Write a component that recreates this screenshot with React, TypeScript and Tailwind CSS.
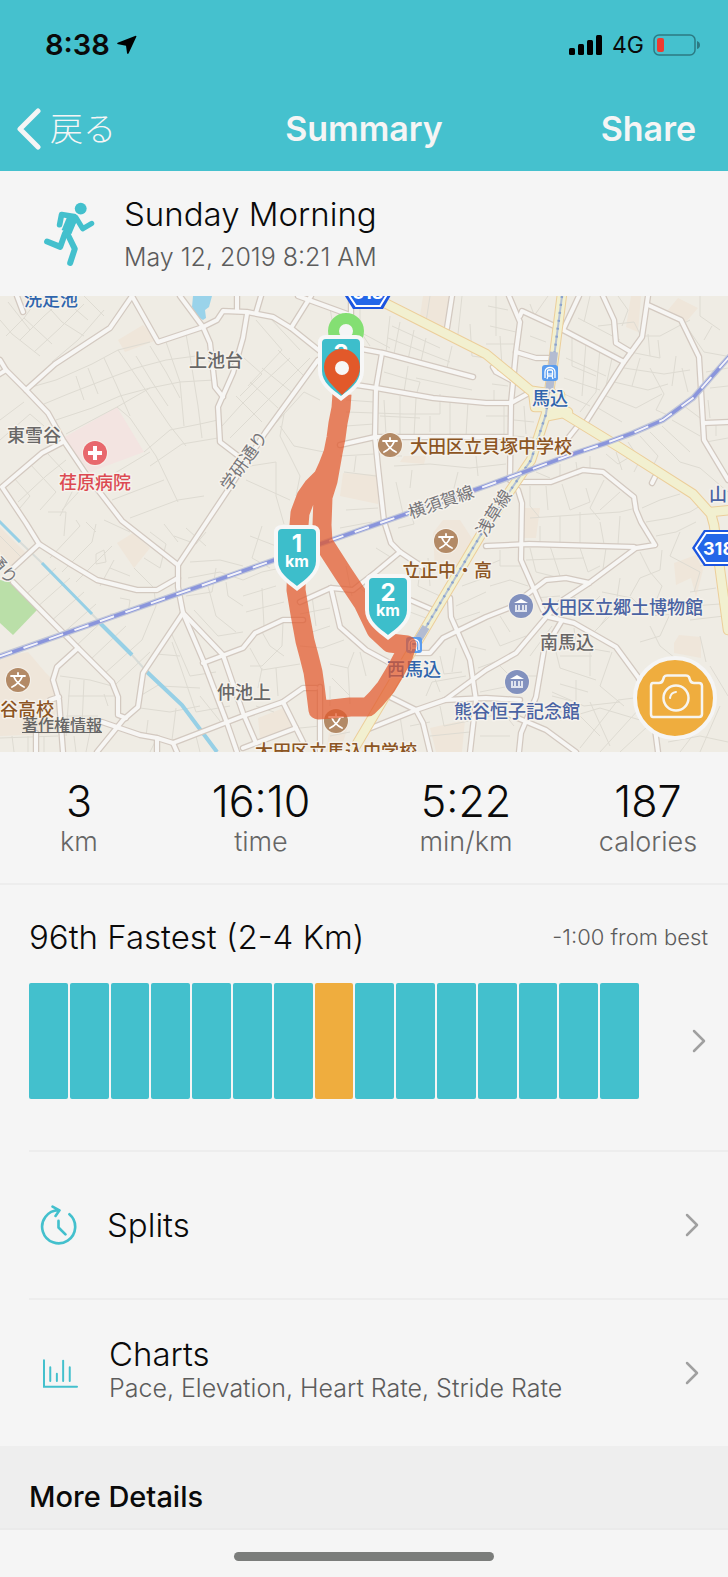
import React from 'react';

const jp = '"Noto Sans CJK JP", "Liberation Sans", sans-serif';

const stats = [
  { value: '3', label: 'km' },
  { value: '16:10', label: 'time' },
  { value: '5:22', label: 'min/km' },
  { value: '187', label: 'calories' },
];

const BAR_COUNT = 15;
const CURRENT_BAR = 7;

const lanes = [
  'M0 24L12 38L40 60M8 6L30 34M24 22L52 48M42 4L62 26L84 40M60 0L88 24M84 0L104 20M20 44L44 20L60 6M34 56L60 32L84 8M52 66L78 44L104 14M6 40L24 22L40 0',
  'M28 92L56 84L92 68L118 54L150 46M44 108L68 98L104 84L136 72L166 64L196 60M56 124L92 112L120 100L150 92L180 86L214 84M66 138L117 111L150 92',
  'M76 80L84 104M88 72L98 98M104 62L116 88L130 120M118 54L136 80L170 130L186 150M136 60L152 86L168 110M150 50L166 76L180 102M166 46L180 86L184 130M186 38L190 60L198 110L202 142',
  'M144 156L170 134L200 128L218 124M150 170L182 148L218 142M117 111L130 122L156 160L178 206M100 186L150 156M112 204L164 184M130 222L178 204L204 200',
  'M0 124L24 106M0 144L30 118L44 130M14 182L30 200L20 212M30 168L56 196L40 214M48 158L76 188L60 220M66 164L46 180L18 206M84 190L62 214M48 216L66 216L64 240',
  'M222 130L240 110L262 88L290 62M230 142L256 116L284 88L310 62M236 100L262 126M250 86L278 112M262 72L294 98M278 54L304 80M244 62L262 78L240 100M256 24L282 54L248 90M270 22L300 54',
  'M264 140L284 118L304 96L320 104M280 130L294 150L324 156M284 118L280 140L300 180L296 200M250 170L276 166L276 200L284 228M246 184L290 204M330 12L336 48M350 20L370 50M360 8L360 36L390 52',
  'M390 20L386 56M400 26L394 58M414 34L408 64M426 42L420 70M392 30L440 52M388 42L450 66M430 0L426 26L446 34M462 0L458 38M470 28L472 60L486 62M452 50L446 76M408 70L404 96M416 82L472 94M384 76L404 82L420 86L416 100',
  'M346 104L374 106M346 116L404 118L440 118L440 98M346 130L374 128M384 104L386 138M400 100L400 140M416 102L414 140M430 120L430 136M380 120L420 122M450 104L450 140M468 106L466 140',
  'M340 160L374 158M344 176L376 180M384 160L402 160M394 170L430 168L470 172L506 168M396 186L404 222M412 174L410 192M458 176L452 200M476 160L478 180M346 214L378 212M340 232L372 226M356 160L354 176',
  'M488 10L508 14M490 30L516 36M496 0L496 40M500 40L502 70M486 48L514 48M492 88L508 90M494 94L494 108M504 110L504 140M486 120L508 120M514 124L534 126M514 140L540 142M524 110L526 138',
  'M530 8L536 24M548 0L534 20M530 40L546 46M572 40L572 70L596 80M586 46L582 100M600 52L596 96L580 116M612 62L606 90M566 62L606 80M564 82L600 94M560 96L590 110M578 22L620 44M590 0L584 26M598 30L634 26L642 42',
  'M618 0L628 14L622 30M630 56L660 62L658 44M624 72L664 78L690 74M614 86L648 94L668 88M606 100L636 112L662 98M598 112L622 126M648 38L650 60M640 62L632 90M650 72L664 98L656 114L670 120M676 60L672 90M682 72L688 96M690 24L660 40L644 40',
  'M682 24L704 56L726 60M700 0L700 20L720 34M712 30L704 44M706 76L728 72M710 92L728 90M708 104L710 122M716 128L716 140M706 146L728 142M684 110L700 122M672 124L700 140M662 130L690 156M650 136L680 166L700 172L728 196M640 140L658 160L650 176',
  'M628 146L640 164L634 176M616 156L622 174M606 158L618 168L628 162M590 160L590 172M576 166L578 180M560 168L560 182M536 176L550 182M530 190L530 210L540 222M546 190L548 214M562 188L570 214L590 206L586 192M604 184L590 212L600 224M620 196L600 214',
  'M530 222L620 216L636 212M540 230L540 246M560 220L560 248M580 216L580 248M600 226L604 248M620 220L618 248M500 254L500 270L522 270M486 270L500 264M530 252L536 276L560 282M550 250L560 280M580 252L588 276L600 270M606 252L602 280M526 264L584 262',
  'M642 212L660 204L680 198M646 226L670 222L690 216L700 210M656 240L676 236L696 226M662 254L660 274L640 282L630 300M680 236L670 260L700 276L694 296M640 256L650 276L662 290L650 320M602 296L632 302L650 320L700 316M620 282L616 308L600 330',
  'M690 296L716 292M692 310L720 308M690 324L724 320M700 270L716 268M706 366L700 340M650 330L660 350L680 366M670 318L660 340L640 346M594 336L610 320M580 320L600 300M574 332L576 350L610 356M612 356L600 390L624 410M556 356L560 372L596 384M576 384L576 406L552 400',
  'M560 360L592 360M560 388L588 396M590 350L590 380M552 396L584 410L620 406M544 412L580 420L600 440M560 424L600 412L640 424M580 452L618 404L650 400M600 456L640 412M620 456L648 430M590 406L610 450M668 446L700 440L728 446M680 456L700 430M720 410L700 456M710 370L728 400',
  'M0 240L22 262M50 262L80 230L76 224M62 276L92 246L96 228M76 286L112 250M24 300L56 272M36 312L70 282M50 326L84 296M62 338L96 308M76 350L108 320M90 364L126 330M104 378L142 344L156 310L154 294M116 388L150 356',
  'M96 258L104 254L106 266L96 268ZM110 272L130 280M114 264L100 290M120 302L130 304L128 318L110 318M86 226L96 236M104 224L130 236M150 236L166 248L160 272L144 262M134 272L156 294M164 228L178 246M174 240L196 248L206 236M186 232L206 250M190 266L220 264L243 270',
  'M188 282L220 276L243 284M186 300L212 296L216 272M194 314L218 340L243 336M208 290L216 320L236 336M226 286L228 300L243 310M170 334L190 380L216 376M156 358L180 360M148 374L160 390L200 392M160 388L140 400M172 346L196 416L230 410M140 412L170 416L200 410',
  'M148 424L146 440M176 412L172 444M200 400L224 430M150 456L156 444M196 440L200 456M60 380L90 384L112 390M68 400L114 400M70 384L66 440M84 384L82 430M104 398L108 410M66 420L98 420M66 436L100 434M74 440L76 456M90 436L86 456M0 442L58 440M12 440L14 456M28 440L28 456M44 440L44 456',
  'M243 300L276 290M246 316L284 306M262 292L264 330M243 284L262 276L290 270M250 240L276 250M262 230L252 262L270 272M346 270L352 300M330 312L300 318M312 300L316 330M330 330L312 336M344 344L322 352L300 350M262 336L270 350L284 360M283 326L282 350L262 370L250 370',
  'M250 352L262 374L300 368M258 392L262 372M276 372L278 400M330 368L348 372L354 356M332 382L350 400M348 372L350 408M360 356L366 380M330 390L330 410M256 410L274 416M300 432L320 430M330 440L350 436M360 292L370 300L386 290M376 300L370 314M390 302L388 282',
  'M376 252L392 262M398 232L414 228L410 214M412 264L440 268M420 274L418 290L440 300M428 262L430 290M442 300L436 320M410 316L426 322M456 310L486 296M456 324L480 316M462 290L484 282M440 360L444 378L462 376M430 370L440 396M456 352L452 376M470 350L486 354M478 372L500 364',
  'M426 400L432 386L466 380M480 396L510 390M400 420L404 446M410 430L430 426M440 410L444 430L474 424M430 440L470 436M478 420L506 420L514 430M480 440L510 440M490 330L500 350L526 340M500 320L510 336M528 290L510 284L490 290M534 302L560 300M496 366L510 380L540 380M552 330L530 360M572 300L590 310',
];

const roads = [
  'M132 0L110 32L55 68L26 94',
  'M0 64L6 74L26 94L48 117L63 144L88 181L122 225L178 269L178 291L183 317L143 377L138 411L123 424L97 456',
  'M-2 79L6 74',
  'M63 146L42 157L2 191L26 227L39 248L72 269L97 284L137 294L157 294L178 282',
  'M132 0L158 46L203 31L217 24L223 15L247 16L273 21L291 32L321 56',
  'M180 0L203 31L210 47L215 91L223 101',
  'M247 18L243 42L233 77L218 111L220 146L237 159',
  'M17 0L23 16',
  'M237 0L237 15',
  'M318 64L265 137L230 191L206 227L178 269',
  'M298 0L350 19',
  'M351 0L351 20',
  'M311 0L291 32',
  'M261 0L256 17',
  'M356 52L383 57L473 81',
  'M356 89L376 92L433 102L486 107L511 107L529 97',
  'M382 57L376 92L375 141L378 171L384 225L391 247L400 256L376 276L353 294L331 292L300 306',
  'M400 256L424 272',
  'M340 149L375 141L486 141L508 141',
  'M452 0L447 32',
  'M509 0L520 26L516 56L511 107L510 184',
  'M520 20L522 15L563 34L624 66',
  'M516 56L536 62L552 62',
  'M579 0L563 34',
  'M603 0L614 24L616 47L631 56',
  'M648 0L642 41L624 66L586 126L577 131L569 141',
  'M648 9L681 24L699 61L704 144L728 184',
  'M704 127L728 126',
  'M521 186L551 186L583 174L603 176L634 201L636 214L641 226L655 249L636 252L589 287L563 304L548 319L516 357L486 374L445 404L416 414L366 434',
  'M518 194L522 207L521 264L543 314L549 321L574 327L616 351L638 381L652 410L658 456',
  'M655 181L652 187',
  'M493 71L496 76L511 84',
  'M39 248L13 272',
  'M13 286L78 352L112 386L118 401L118 419L126 422',
  'M78 352L57 371L53 384L59 404L63 456',
  'M50 404L59 401',
  'M183 317L203 364L227 427L237 456',
  'M183 317L223 359L243 417L256 447',
  'M203 367L243 352L255 337L283 324L303 324',
  'M102 426L140 439L157 442L173 447L243 420L283 406L303 392L316 392',
  'M157 442L157 456',
  'M173 447L177 456',
  'M36 437L36 456',
  'M243 452L296 432',
  'M283 406L303 446',
  'M331 292L340 331L366 354L390 367',
  'M390 401L416 414L423 427L430 456',
  'M445 404L486 402L520 404',
  'M450 302L451 321L470 364L476 404L470 456',
  'M415 357L430 357L443 342L486 321L509 312L546 284L566 282L589 287',
  'M410 304L433 314',
  'M320 391L320 456',
  'M486 250L529 248L634 251',
  'M561 326L544 354L536 401L521 437L519 456',
  'M506 417L546 434L576 456',
];

const highways = [
  'M365 -3L486 58L531 95L565 118L619 151L693 198L711 218L714 229L728 334',
  'M562 -2L554 61L546 118L531 164L486 230L410 358L351 458',
  'M548 120L568 116',
  'M711 216L730 214',
];

const railway = 'M-2 361L243 275L386 225L486 190L576 157L606 147L633 137L663 124L693 102L730 60';

const labels = [
  { text: '洗足池', x: 24, y: 10, fill: '#2f65ad' },
  { text: '上池台', x: 189, y: 71, fill: '#686766' },
  { text: '東雪谷', x: 7, y: 146, fill: '#686766' },
  { text: '荏原病院', x: 59, y: 193, fill: '#dc4a52' },
  { text: '馬込', x: 532, y: 109, fill: '#2f65ad' },
  { text: '大田区立貝塚中学校', x: 410, y: 157, fill: '#8c5523' },
  { text: '山', x: 709, y: 205, fill: '#4a63a3' },
  { text: '立正中・高', x: 402, y: 281, fill: '#8c5523' },
  { text: '大田区立郷土博物館', x: 541, y: 318, fill: '#4a63a3' },
  { text: '南馬込', x: 540, y: 353, fill: '#686766' },
  { text: '熊谷恒子記念館', x: 454, y: 422, fill: '#4a63a3' },
  { text: '西馬込', x: 387, y: 380, fill: '#2f65ad' },
  { text: '仲池上', x: 217, y: 403, fill: '#686766' },
  { text: '谷高校', x: 0, y: 420, fill: '#8c5523' },
  { text: '大田区立馬込中学校', x: 255, y: 462, fill: '#8c5523' },
];

const lineLabels = [
  { text: '学研通り', x: 244, y: 165, angle: -55 },
  { text: '横須賀線', x: 441, y: 206, angle: -19 },
  { text: '浅草線', x: 494, y: 217, angle: -58 },
  { text: '通り', x: 3, y: 273, angle: 48 },
];

function School({ x, y }: { x: number; y: number }) {
  return (
    <g transform={`translate(${x} ${y})`}>
      <circle r="13" fill="#f5f1ea" />
      <circle r="12" fill="#b38a66" />
      <path d="M0 -7V-4M-7 -4H7M-4 -3C-2 2 2 5 6 7M4 -3C2 2 -2 5 -6 7" fill="none" stroke="#fff" strokeWidth="1.8" strokeLinecap="round" />
    </g>
  );
}

function Museum({ x, y }: { x: number; y: number }) {
  return (
    <g transform={`translate(${x} ${y})`}>
      <circle r="13" fill="#f5f1ea" />
      <circle r="12" fill="#8291be" />
      <path d="M-7 -3L0 -7L7 -3Z" fill="#fff" />
      <path d="M-5 -1V4M-2 -1V4M2 -1V4M5 -1V4M-6 5H6" stroke="#fff" strokeWidth="1.5" />
    </g>
  );
}

function Station({ x, y }: { x: number; y: number }) {
  return (
    <g transform={`translate(${x} ${y})`}>
      <rect x="-8" y="-8" width="16" height="16" rx="3" fill="#5a9cee" />
      <path d="M-5 5V-1C-5 -7 5 -7 5 -1V5" fill="none" stroke="#fff" strokeWidth="1.3" />
      <rect x="-2.5" y="-3" width="5" height="6" rx="1" fill="none" stroke="#fff" strokeWidth="1.3" />
      <path d="M-2 3L-3 6M2 3L3 6M-2 1H2" stroke="#fff" strokeWidth="1.2" />
    </g>
  );
}

function KmMarker({ x, y, value }: { x: number; y: number; value: number }) {
  return (
    <g transform={`translate(${x} ${y})`} fontFamily="Inter, sans-serif" fontWeight="700" textAnchor="middle">
      <path d="M-15 0H15Q23 0 23 8V36C23 48 12 57 0 66C-12 57 -23 48 -23 36V8Q-23 0 -15 0Z" fill="#f7f7f7" />
      <path d="M-15 4H15Q19 4 19 8V36C19 47 9 54 0 61C-9 54 -19 47 -19 36V8Q-19 4 -15 4Z" fill="#3dbecb" />
      <text y="27" fontSize="24" fill="#fff">{value}</text>
      <text y="42" fontSize="16" fill="#fff">km</text>
    </g>
  );
}

function RouteMap() {
  return (
    <section className="relative h-[456px] overflow-hidden bg-[#efece4]" aria-label="Route map">
      <svg viewBox="0 0 728 456" preserveAspectRatio="xMidYMid slice" className="block h-full w-full">
        {/* areas */}
        <g fill="#efe6da">
          <path d="M118 44L143 29L157 44L125 56Z" />
          <path d="M117 247L133 237L150 252L134 272Z" />
          <path d="M0 361L28 356L45 376L53 384L59 404L50 438L0 440Z" />
          <path d="M0 231L25 256L13 272L0 260Z" />
          <path d="M258 422L286 411L298 431L260 442Z" />
          <path d="M343 177L378 179L378 208L340 200Z" />
          <path d="M631 0L641 0L638 36L626 31Z" />
          <path d="M678 2L698 12L686 26L668 14Z" />
          <path d="M674 347L679 339L701 341L701 362L674 357Z" />
          <path d="M674 267L696 259L703 274L696 301L691 282L676 289Z" />
          <path d="M433 237L443 224L460 224L473 244L463 274L435 274Z" />
          <path d="M423 0L450 0L446 34L420 20Z" />
          <path d="M330 430L350 424L340 456L326 456Z" />
          <path d="M430 432L465 424L462 456L436 456Z" />
          <path d="M404 160L426 160L424 168L400 166Z" />
          <path d="M523 212L540 212L536 242L523 242Z" />
        </g>
        <path d="M63 142L117 111L144 156L90 176Z" fill="#f3e4e1" />
        <path d="M0 284L13 286L37 314L13 339L0 327Z" fill="#badfa8" />
        <path d="M193 0H212L209 11L205 14L206 22L203 24L195 19L192 11Z" fill="#9ad3ea" />

        {/* minor streets */}
        <g fill="none" stroke="#deDbd2" strokeWidth="1">
          {lanes.map((d) => <path key={d} d={d} />)}
        </g>

        <path d="M-2 224L20 246L42 267L132 359L147 376L182 409L217 456" fill="none" stroke="#d8dcd8" strokeWidth="2" />
        <g fill="none" stroke="#97d0e6">
          <path d="M-2 224L20 246M42 267L92 318" strokeWidth="3" />
          <path d="M100 327L132 359M147 376L182 409L217 456" strokeWidth="4" />
        </g>

        {/* roads: casing first, then surface */}
        <g fill="none" strokeLinejoin="round" strokeLinecap="round">
          <g stroke="#d3c9c0" strokeWidth="6.5">
            {roads.map((d) => <path key={d} d={d} />)}
          </g>
          <g stroke="#f7f6f4" strokeWidth="4">
            {roads.map((d) => <path key={d} d={d} />)}
          </g>
          <g stroke="#ecce9a" strokeWidth="10.5">
            {highways.map((d) => <path key={d} d={d} />)}
            <path d="M533 95L560 99L560 111L535 111Z" />
          </g>
          <g stroke="#f2f0d0" strokeWidth="8.5">
            {highways.map((d) => <path key={d} d={d} />)}
            <path d="M533 95L560 99L560 111L535 111Z" fill="#f2f0d0" />
          </g>
        </g>

        {/* rail lines */}
        <g fill="none">
          <path d="M562 0L554 61L546 118L531 164L486 230L410 358" stroke="#b4c2d6" strokeWidth="2" />
          <path d="M562 0L554 61L546 118L531 164L486 230L410 358" stroke="#8ba3cc" strokeWidth="2.5" strokeDasharray="2 6" />
          <path d="M554 56L549 96M426 331L416 347" stroke="#b3bcd2" strokeWidth="8" />
          <path d={railway} stroke="#c3c8d8" strokeWidth="6" />
          <path d={railway} stroke="#8a95dc" strokeWidth="3.5" />
          <path d={railway} stroke="#f4f4fa" strokeWidth="2" strokeDasharray="15 12" />
        </g>

        {/* prefectural road shields */}
        <g fontFamily="Inter, sans-serif" fontWeight="700" fontSize="18" fill="#fff">
          <path d="M340 -8L353 13H383L395 -8Z" fill="#1c55e0" />
          <path d="M344 -8L356 10H380L391 -8Z" fill="#2467e8" stroke="#fff" strokeWidth="2" />
          <text x="368" y="3" textAnchor="middle">318</text>
          <path d="M692 252L704 234H740V270H704Z" fill="#1c55e0" />
          <path d="M696 252L706 237H740V267H706Z" fill="#2467e8" stroke="#fff" strokeWidth="2" />
          <text x="703" y="259">318</text>
        </g>

        <g style={{ fontFamily: jp }} fontSize="18" fontWeight="500" stroke="#f5f2ec" strokeWidth="3" strokeLinejoin="round" paintOrder="stroke">
          {lineLabels.map((l) => (
            <text key={l.text} transform={`translate(${l.x} ${l.y}) rotate(${l.angle})`} y="6" textAnchor="middle" fontSize="17" fontWeight="400" fill="#77767a">{l.text}</text>
          ))}
          {labels.map((l) => (
            <text key={l.text} x={l.x} y={l.y} fill={l.fill}>{l.text}</text>
          ))}
        </g>

        <circle cx="95" cy="157" r="13" fill="#f5f1ea" />
        <circle cx="95" cy="157" r="12" fill="#e8686d" />
        <path d="M95 150V164M88 157H102" stroke="#fff" strokeWidth="4" />
        <School x={390} y={149} />
        <School x={446} y={245} />
        <School x={18} y={384} />
        <School x={336} y={425} />
        <Museum x={521} y={310} />
        <Museum x={517} y={386} />
        <Station x={550} y={77} />
        <Station x={414} y={349} />

        {/* recorded route */}
        <path
          d="M342 98L341 112L338 127L336 142L333 157L328 170L323 181L313 191L306 201L300 217L299 229L297 262L296 294L300 318L303 334L305 345L309 360L313 376L315 390L318 414L332 413L350 411L368 411L376 403L386 391L395 376L403 361L407 349L390 347L376 334L363 307L343 277L323 246L322 229L323 201L328 185L333 157"
          fill="none"
          stroke="#e2582b"
          strokeOpacity="0.72"
          strokeWidth="19"
          strokeLinejoin="round"
        />

        <circle cx="346" cy="35" r="12.5" fill="#f5f5f5" stroke="#84df73" strokeWidth="11" />
        <KmMarker x={341} y={39} value={3} />
        <KmMarker x={297} y={229} value={1} />
        <KmMarker x={388} y={278} value={2} />
        <path d="M342 99C333 90 324 83 324 71A18 18 0 0 1 360 71C360 83 351 90 342 99Z" fill="#e2592a" />
        <circle cx="342" cy="72" r="7" fill="#f7f7f7" />
      </svg>
      <a href="#legal" className="absolute bottom-[17px] left-[22px] text-[16px] leading-[22px] font-medium text-[#666] underline" style={{ fontFamily: jp }}>著作権情報</a>
      <button type="button" aria-label="Add photo" className="absolute right-[11px] bottom-[12px] h-[84px] w-[84px] rounded-full border-4 border-[#f5f5f5] bg-[#efad3e]">
        <svg viewBox="4 4 76 76" className="h-full w-full" fill="none" stroke="#f7f5f0" strokeWidth="2.5" strokeLinejoin="round" strokeLinecap="round">
          <path d="M20 27H26Q29 27 30 24L31 21Q32 19.500 34 19.500H53Q55 19.500 56 21L57 24Q58 27 61 27H66Q69 27 69 30V58Q69 61 66 61H20Q18 61 18 58V30Q18 27 20 27Z" />
          <circle cx="43" cy="42" r="12.500" />
          <path d="M37 42A7 7 0 0 1 43 36" strokeWidth="2" />
        </svg>
      </button>
    </section>
  );
}

function Chevron() {
  return (
    <svg viewBox="0 0 14 24" className="h-6 w-[14px] shrink-0" fill="none" stroke="#a0a0a0" strokeWidth="2.5" strokeLinecap="round" strokeLinejoin="round" aria-hidden="true">
      <path d="M2 2L12 12L2 22" />
    </svg>
  );
}

export default function App() {
  return (
    <div className="min-h-screen bg-[#f5f5f5] font-['Inter','Noto_Sans_CJK_JP',sans-serif] text-[#0a0a0a]">
      <header className="bg-[#45c1ce]">
        <div className="flex h-[86px] items-center justify-between pt-[4px] pr-[28px] pl-[45px]">
          <div className="flex items-center gap-[7px]">
            <span className="text-[29px] leading-9 font-semibold">8:38</span>
            <svg viewBox="350 106 60 60" className="h-5 w-5" aria-hidden="true">
              <path d="M352 129L406 108Q409 108 408 111L385 161Q382 165 380 160L377 138L354 134Q348 132 352 129Z" />
            </svg>
          </div>
          <div className="flex items-center gap-[9px]">
            <svg viewBox="0 0 34 22" className="h-[22px] w-[34px]" aria-hidden="true">
              <rect x="0" y="14" width="6" height="7" rx="1.500" />
              <rect x="9" y="10" width="6" height="11" rx="1.500" />
              <rect x="18" y="6" width="6" height="15" rx="1.500" />
              <rect x="27" y="1" width="6" height="20" rx="1.500" />
            </svg>
            <span className="text-[23px] leading-8">4G</span>
            <svg viewBox="0 0 47 22" className="h-[22px] w-[47px]" aria-hidden="true">
              <rect x="1" y="1" width="41" height="20" rx="5" fill="none" stroke="#2c7a83" strokeWidth="1.500" />
              <rect x="4" y="4" width="7" height="14" rx="2" fill="#ee3b30" />
              <path d="M44 7Q47 8 47 11Q47 14 44 15Z" fill="#2c7a83" />
            </svg>
          </div>
        </div>
        <nav className="grid h-[85px] grid-cols-[1fr_auto_1fr] items-center pr-[32px] pl-[16px] text-[#f5f5f5]">
          <button type="button" className="flex items-center gap-[8px] justify-self-start text-[33px] leading-10 font-light">
            <svg viewBox="0 0 26 42" className="h-[42px] w-[26px]" fill="none" stroke="currentColor" strokeWidth="5" strokeLinecap="round" strokeLinejoin="round" aria-hidden="true">
              <path d="M22 3L4 21L22 39" />
            </svg>
            戻る
          </button>
          <h1 className="pl-4 text-[34px] leading-10 font-semibold">Summary</h1>
          <button type="button" className="justify-self-end text-[34px] leading-10 font-semibold">Share</button>
        </nav>
      </header>

      <section className="flex h-[125px] items-center gap-[28px] pl-[43px]">
        <svg viewBox="128 605 160 200" className="h-[66px] w-[53px]" fill="none" stroke="#43c0cd" strokeLinecap="round" strokeLinejoin="round" aria-hidden="true">
          <circle cx="242" cy="628" r="18" fill="#43c0cd" stroke="none" />
          <path d="M178 677L184 646L222 652" strokeWidth="17" />
          <path d="M216 658L199 699" strokeWidth="32" strokeLinecap="butt" />
          <path d="M212 656L222 656L198 706" strokeWidth="22" />
          <path d="M228 656L248 689L275 673" strokeWidth="16" />
          <path d="M194 704L180 744L140 728" strokeWidth="18" />
          <path d="M202 705L224 750L210 793" strokeWidth="18" />
        </svg>
        <div className="pt-[2px]">
          <h2 className="text-[33px] leading-[44px] font-light">Sunday Morning</h2>
          <p className="text-[25px] leading-[42px] font-light text-[#5c5c5c]">May 12, 2019 8:21 AM</p>
        </div>
      </section>

      <RouteMap />

      <dl className="grid h-[133px] grid-cols-[158fr_206fr_204fr_160fr] border-b-2 border-[#ededed] pt-[24px] text-center">
        {stats.map((s) => (
          <div key={s.label} className="flex flex-col-reverse justify-end">
            <dt className="text-[27px] leading-[32px] font-light text-[#666]">{s.label}</dt>
            <dd className="text-[43px] leading-[50px] font-light">{s.value}</dd>
          </div>
        ))}
      </dl>

      <section className="ml-[29px] h-[267px] border-b-2 border-[#ededed] pt-[30px]">
        <div className="flex items-center justify-between pr-[20px]">
          <h2 className="text-[33px] leading-[44px] font-light">96th Fastest (2-4 Km)</h2>
          <span className="text-[22px] leading-[44px] font-light text-[#5c5c5c]">-1:00 from best</span>
        </div>
        <button type="button" aria-label="Show ranking" className="mt-[24px] flex w-full items-center justify-between gap-[53px] pr-[22px]">
          <span className="flex h-[116px] flex-1 gap-[2px]">
            {Array.from({ length: BAR_COUNT }, (_, i) => (
              <span key={i} className={i === CURRENT_BAR ? 'flex-1 rounded-[2px] bg-[#efad3e]' : 'flex-1 rounded-[2px] bg-[#43c0cd]'} />
            ))}
          </span>
          <Chevron />
        </button>
      </section>

      <button type="button" className="ml-[29px] flex h-[148px] w-[calc(100%-29px)] items-center border-b-2 border-[#ededed] pr-[29px] pl-[11px] text-left">
        <svg viewBox="60 45 112 124" className="h-[41px] w-[37px]" fill="none" stroke="#43c0cd" strokeWidth="8" strokeLinecap="round" strokeLinejoin="round" aria-hidden="true">
          <path d="M149 73A50 50 0 1 1 116 61M98 50L119 61L107 78M116 93V113L137 134" />
        </svg>
        <span className="ml-[30px] flex-1 text-[33px] leading-[40px] font-light">Splits</span>
        <Chevron />
      </button>

      <button type="button" className="ml-[29px] flex h-[146px] w-[calc(100%-29px)] items-center pr-[29px] pl-[14px] text-left">
        <svg viewBox="70 504 106 86" className="h-[29px] w-[35px]" fill="none" stroke="#43c0cd" strokeWidth="6" strokeLinecap="round" aria-hidden="true">
          <path d="M73 507V587H173M92 528V570M112 548V570M131 508V570M151 528V570" />
        </svg>
        <span className="ml-[31px] flex-1 pb-[6px]">
          <span className="block text-[33px] leading-[36px] font-light">Charts</span>
          <span className="block text-[25px] leading-[32px] font-light text-[#5c5c5c]">Pace, Elevation, Heart Rate, Stride Rate</span>
        </span>
        <Chevron />
      </button>

      <section className="flex h-[84px] items-center border-b-2 border-[#eaeaea] bg-[#eee] pt-[20px] pl-[29px]">
        <h2 className="text-[29px] leading-9 font-medium">More Details</h2>
      </section>
      <footer className="flex h-[47px] items-center justify-center pt-[6px]">
        <div className="h-[9px] w-[260px] rounded-full bg-[#7b7d7b]" />
      </footer>
    </div>
  );
}
